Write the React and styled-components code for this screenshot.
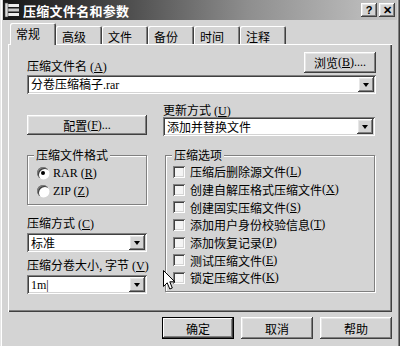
import React from 'react';
import styled, { createGlobalStyle, css } from 'styled-components';

const GlobalStyle = createGlobalStyle`
  html, body {
    margin: 0;
    padding: 0;
    background: #d4d4d4;
  }
  body {
    font-family: "Liberation Serif", "Noto Sans CJK SC", serif;
    font-size: 12px;
    color: #000;
  }
`;

const raised = css`
  background: #d4d4d4;
  box-shadow: inset -1px -1px #404040, inset 1px 1px #fff,
    inset -2px -2px #808080, inset 2px 2px #e6e6e6;
`;

const sunken = css`
  background: #fff;
  box-shadow: inset 1px 1px #808080, inset -1px -1px #fff,
    inset 2px 2px #404040, inset -2px -2px #d4d4d4;
`;

const Window = styled.div`
  position: relative;
  width: 400px;
  height: 346px;
  box-sizing: border-box;
  padding: 0 3px;
  background: #d4d4d4;
  overflow: hidden;
  box-shadow: inset 1px 0 #e6e6e6, inset -1px 0 #404040, inset 2px 0 #fff,
    inset -2px 0 #808080;
`;

const TitleBar = styled.div`
  display: flex;
  align-items: center;
  height: 20px;
  padding: 0 2px 0 1px;
  background: linear-gradient(90deg, #161616 0%, #4a4a4a 30%, #8e8e8e 62%, #c6c6c6 100%);
`;

const TitleText = styled.span`
  margin-left: 3px;
  flex: 1;
  color: #fff;
  font-family: "Noto Sans CJK SC", sans-serif;
  font-weight: bold;
  font-size: 13px;
  letter-spacing: 0.3px;
`;

const CaptionButton = styled.div`
  ${raised};
  width: 16px;
  height: 14px;
  margin-left: ${(p) => (p.$gap ? '2px' : '0')};
  display: flex;
  align-items: center;
  justify-content: center;
  font-family: "Liberation Sans", sans-serif;
  font-weight: bold;
  font-size: 11px;
  line-height: 1;
`;

const Body = styled.div`
  padding: 0 5px;
`;

const TabStrip = styled.div`
  position: relative;
  z-index: 1;
  display: flex;
  align-items: flex-end;
  height: 21px;
  margin-top: 3px;
  padding-left: 2px;
`;

const Tab = styled.div`
  width: 46px;
  height: ${(p) => (p.$active ? '22px' : '18px')};
  margin-bottom: ${(p) => (p.$active ? '-1px' : '0')};
  box-sizing: border-box;
  padding: 4px 0 0 6px;
  background: #d4d4d4;
  border-radius: 2px 2px 0 0;
  box-shadow: inset 1px 1px #fff, inset -1px 0 #404040, inset -2px 0 #808080;
  font-family: "Noto Sans CJK SC", sans-serif;
  font-size: 12px;
  line-height: 14px;
`;

const Panel = styled.div`
  height: 268px;
  box-sizing: border-box;
  padding: 8px 16px 0 19px;
  box-shadow: inset 1px 1px #fff, inset -1px -1px #404040, inset -2px -2px #808080;
`;

const TopRow = styled.div`
  display: flex;
  justify-content: space-between;
  align-items: flex-end;
  height: 21px;
`;

const Label = styled.div`
  height: 14px;
  line-height: 14px;
  margin-top: ${(p) => p.$top || 0}px;
  font-family: "Noto Sans CJK SC", sans-serif;
  white-space: nowrap;
  span {
    font-family: "Liberation Serif", serif;
  }
`;

const Key = styled.u`
  text-underline-offset: 1px;
`;

const Button = styled.div`
  ${raised};
  width: ${(p) => p.$w}px;
  height: ${(p) => p.$h || 21}px;
  margin-top: ${(p) => p.$top || 0}px;
  box-sizing: border-box;
  display: flex;
  align-items: center;
  justify-content: center;
  font-family: "Noto Sans CJK SC", sans-serif;
  white-space: nowrap;
  ${(p) =>
    p.$default &&
    css`
      box-shadow: inset 0 0 0 1px #000, inset -2px -2px #404040, inset 2px 2px #fff,
        inset -3px -3px #808080;
    `}
`;

const Combo = styled.div`
  ${sunken};
  height: 19px;
  margin-top: ${(p) => p.$top || 0}px;
  box-sizing: border-box;
  display: flex;
  align-items: center;
  padding: 2px 2px 2px 4px;
  font-family: "Noto Sans CJK SC", sans-serif;
`;

const ComboText = styled.div`
  flex: 1;
  line-height: 14px;
  white-space: nowrap;
  span {
    font-family: "Liberation Serif", serif;
  }
`;

const DropButton = styled.div`
  ${raised};
  width: 16px;
  height: 15px;
  display: flex;
  align-items: center;
  justify-content: center;
  &::after {
    content: '';
    border-left: 3.5px solid transparent;
    border-right: 3.5px solid transparent;
    border-top: 4px solid #000;
  }
`;

const Columns = styled.div`
  display: flex;
  gap: 16px;
`;

const Column = styled.div`
  display: flex;
  flex-direction: column;
  width: ${(p) => p.$w}px;
`;

const Group = styled.fieldset`
  margin: ${(p) => p.$top}px 0 0 ${(p) => p.$left || 0}px;
  padding: ${(p) => p.$pad}px 0 4px 0;
  border: 1px solid #808080;
  box-shadow: inset 1px 1px #fff, 1px 1px #fff;
  min-width: 0;
`;

const Legend = styled.legend`
  margin-left: 6px;
  padding: 0 2px;
  background: #d4d4d4;
  height: 14px;
  line-height: 14px;
  font-family: "Noto Sans CJK SC", sans-serif;
`;

const OptionRow = styled.div`
  display: flex;
  align-items: center;
  height: ${(p) => p.$h}px;
  padding-left: ${(p) => p.$indent}px;
  font-family: "Noto Sans CJK SC", sans-serif;
  white-space: nowrap;
  span {
    font-family: "Liberation Serif", serif;
  }
`;

const Radio = styled.div`
  position: relative;
  width: 12px;
  height: 12px;
  margin-right: 4px;
  border-radius: 50%;
  background: #fff;
  box-shadow: inset 1px 1px #808080, inset 2px 2px #404040, 0.5px 0.5px #fff;
  ${(p) =>
    p.$on &&
    css`
      &::after {
        content: '';
        position: absolute;
        left: 4px;
        top: 4px;
        width: 4px;
        height: 4px;
        border-radius: 50%;
        background: #000;
      }
    `}
`;

const Check = styled.div`
  ${sunken};
  width: 12px;
  height: 12px;
  margin-right: 5px;
  background: #f4f4f4;
`;

const Footer = styled.div`
  display: flex;
  justify-content: flex-end;
  gap: 7px;
  margin-top: 5px;
`;

const Cursor = styled.svg`
  position: absolute;
  left: 163px;
  top: 270px;
`;

const RarIcon = () => (
  <svg width="16" height="16" viewBox="0 0 16 16">
    <rect x="1" y="1" width="3" height="14" fill="#ddd" />
    <rect x="4" y="2" width="11" height="3" fill="#eee" />
    <rect x="4" y="6.5" width="11" height="3" fill="#ccc" />
    <rect x="4" y="11" width="11" height="3" fill="#eee" />
    <rect x="1" y="1" width="3" height="14" fill="none" stroke="#444" strokeWidth="0.6" />
  </svg>
);

const options = [
  ['压缩后删除源文件', 'L'],
  ['创建自解压格式压缩文件', 'X'],
  ['创建固实压缩文件', 'S'],
  ['添加用户身份校验信息', 'T'],
  ['添加恢复记录', 'P'],
  ['测试压缩文件', 'E'],
  ['锁定压缩文件', 'K'],
];

const tabs = ['常规', '高级', '文件', '备份', '时间', '注释'];

const Hot = ({ k }) => (
  <span>
    {' ('}
    <Key>{k}</Key>)
  </span>
);

export default function App() {
  return (
    <>
      <GlobalStyle />
      <Window>
        <TitleBar>
          <RarIcon />
          <TitleText>压缩文件名和参数</TitleText>
          <CaptionButton>?</CaptionButton>
          <CaptionButton $gap>✕</CaptionButton>
        </TitleBar>
        <Body>
          <TabStrip>
            {tabs.map((t, i) => (
              <Tab key={t} $active={i === 0}>
                {t}
              </Tab>
            ))}
          </TabStrip>
          <Panel>
            <TopRow>
              <Label>
                压缩文件名<Hot k="A" />
              </Label>
              <Button $w={72}>
                浏览<span style={{ fontFamily: 'Liberation Serif, serif' }}>
                  {' ('}
                  <Key>B</Key>)....
                </span>
              </Button>
            </TopRow>
            <Combo $top={2}>
              <ComboText>
                分卷压缩稿子<span>.rar</span>
              </ComboText>
              <DropButton />
            </Combo>
            <Columns>
              <Column $w={120}>
                <Button $w={120} $h={20} $top={21}>
                  配置<span style={{ fontFamily: 'Liberation Serif, serif' }}>
                    {' ('}
                    <Key>F</Key>)...
                  </span>
                </Button>
                <Group $top={13} $pad={2}>
                  <Legend>压缩文件格式</Legend>
                  <OptionRow $h={18} $indent={9}>
                    <Radio $on />
                    <span>
                      RAR (<Key>R</Key>)
                    </span>
                  </OptionRow>
                  <OptionRow $h={18} $indent={9}>
                    <Radio />
                    <span>
                      ZIP (<Key>Z</Key>)
                    </span>
                  </OptionRow>
                </Group>
                <Label $top={11}>
                  压缩方式<Hot k="C" />
                </Label>
                <Combo $top={3}>
                  <ComboText>标准</ComboText>
                  <DropButton />
                </Combo>
                <Label $top={6}>
                  压缩分卷大小, 字节<Hot k="V" />
                </Label>
                <Combo $top={3}>
                  <ComboText>
                    <span>1m|</span>
                  </ComboText>
                  <DropButton />
                </Combo>
              </Column>
              <Column $w={212}>
                <Label $top={9}>
                  更新方式<Hot k="U" />
                </Label>
                <Combo>
                  <ComboText>添加并替换文件</ComboText>
                  <DropButton />
                </Combo>
                <Group $top={12} $left={2} $pad={1}>
                  <Legend>压缩选项</Legend>
                  {options.map(([text, k]) => (
                    <OptionRow key={k} $h={17.7} $indent={7}>
                      <Check />
                      {text}
                      <Hot k={k} />
                    </OptionRow>
                  ))}
                </Group>
              </Column>
            </Columns>
          </Panel>
          <Footer>
            <Button $w={72} $h={22} $default>
              确定
            </Button>
            <Button $w={72} $h={22}>
              取消
            </Button>
            <Button $w={72} $h={22}>
              帮助
            </Button>
          </Footer>
        </Body>
        <Cursor width="13" height="21" viewBox="0 0 13 21">
          <path
            d="M0.5 0.5 L0.5 16.5 L4.2 12.8 L6.8 19 L9.3 18 L6.8 11.8 L11.8 11.8 Z"
            fill="#fff"
            stroke="#000"
            strokeWidth="1"
          />
        </Cursor>
      </Window>
    </>
  );
}
